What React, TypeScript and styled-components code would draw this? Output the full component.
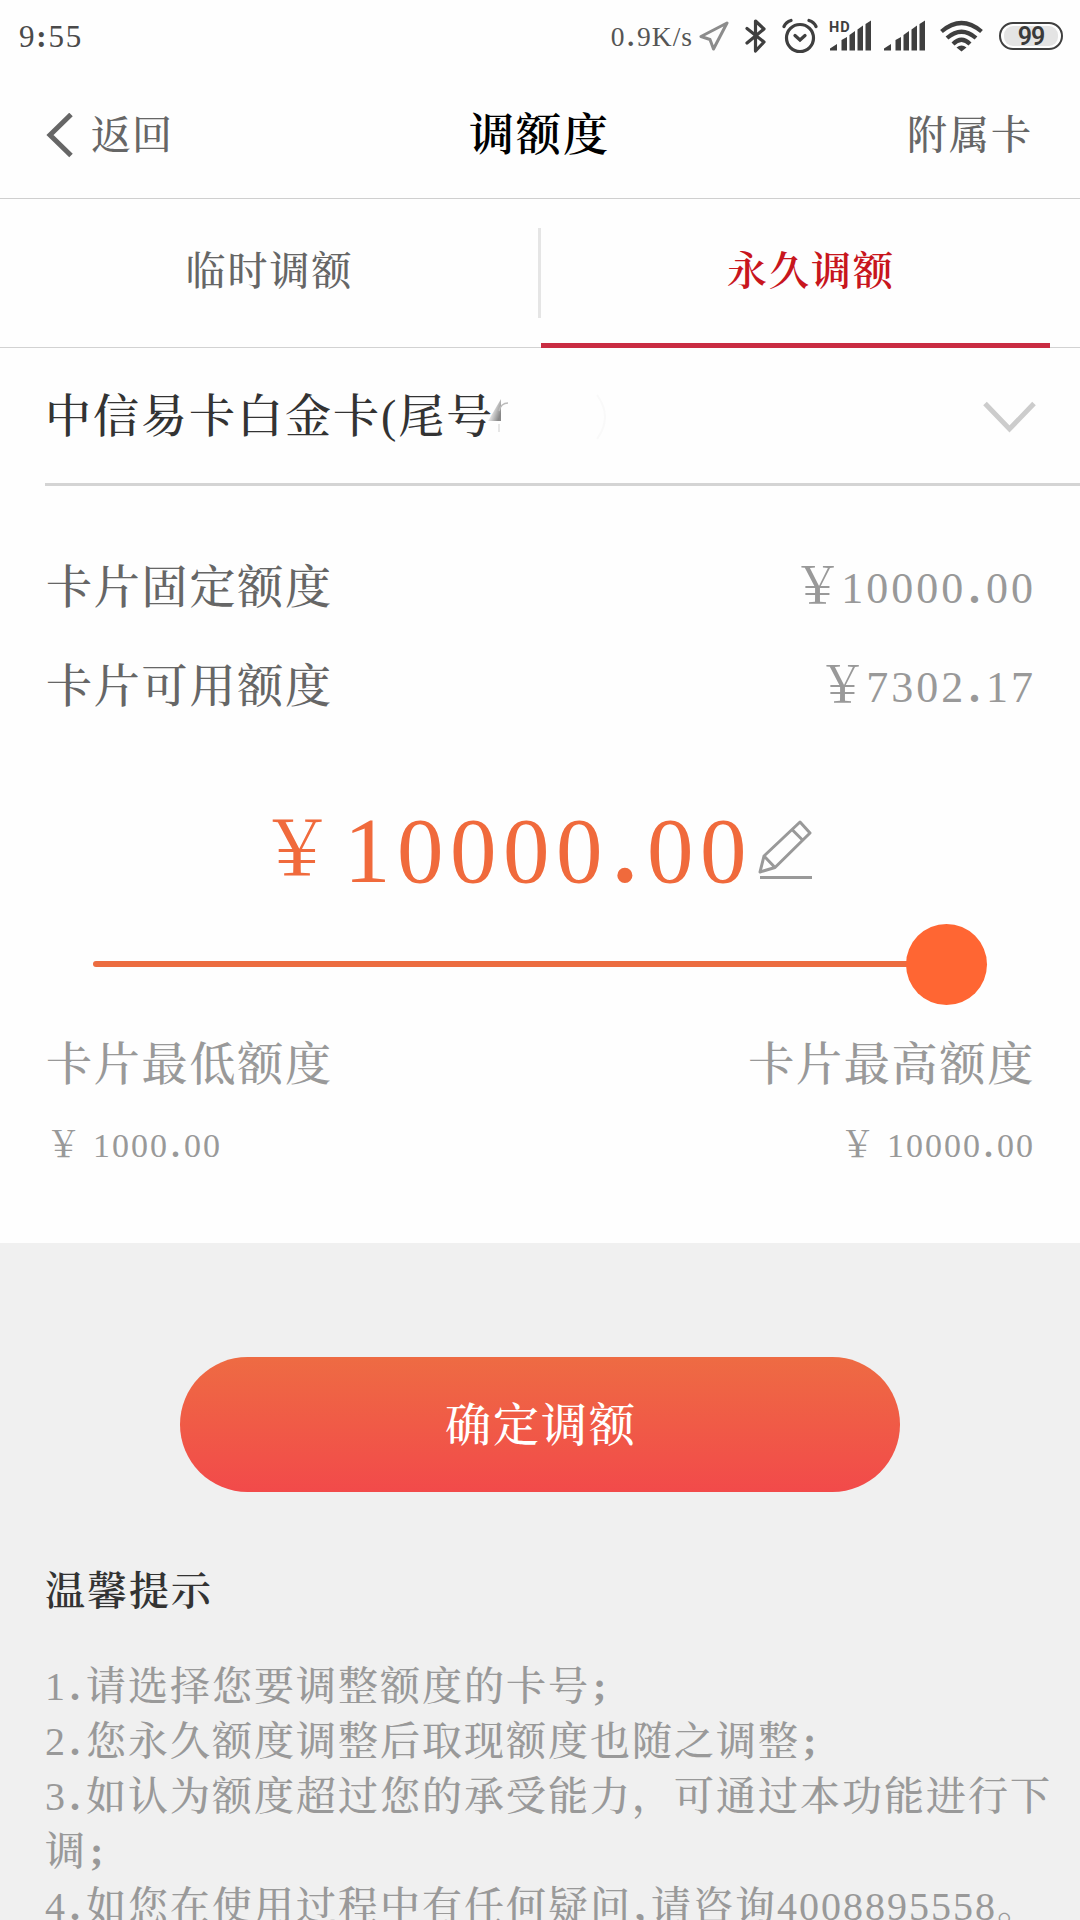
import React from 'react';
import styled, { createGlobalStyle } from 'styled-components';

const serif = `"Liberation Serif", "Noto Serif CJK SC", "Noto Sans CJK SC", serif`;

const Global = createGlobalStyle`
  * { box-sizing: border-box; }
  body { margin: 0; background: #fefefe; }
`;

const Screen = styled.div`
  width: 1080px;
  height: 1920px;
  overflow: hidden;
  display: flex;
  flex-direction: column;
  background: #fefefe;
  font-family: ${serif};
  white-space: nowrap;

  > * { flex-shrink: 0; }
`;

const Text = styled.span<{ $size: number; $color?: string; $track?: number; $weight?: number }>`
  display: block;
  font-size: ${(p) => p.$size}px;
  line-height: 60px;
  letter-spacing: ${(p) => p.$track ?? 0}px;
  color: ${(p) => p.$color ?? '#666'};
  font-weight: ${(p) => p.$weight ?? 500};
`;

const StatusBar = styled.div`
  height: 72px;
  padding: 0 17px 0 19px;
  display: flex;
  align-items: center;
  justify-content: space-between;
`;

const StatusText = styled(Text)`
  padding-top: 2px;
  font-weight: 400;
`;

const StatusIcons = styled.div`
  display: flex;
  align-items: center;
`;

const Glyph = styled.svg<{ $gap: number }>`
  display: block;
  flex: none;
  margin-left: ${(p) => p.$gap}px;
`;

const Battery = styled.div`
  width: 64px;
  height: 28px;
  margin: 0 0 1px 16px;
  padding: 2px 3px;
  border: 2.5px solid #3f3f3f;
  border-radius: 14px;
  display: flex;
`;

const Charge = styled.div`
  flex: 1;
  padding-top: 2px;
  border-radius: 9px;
  background: #e4e4e4;
  display: flex;
  align-items: center;
  justify-content: center;
  font: 600 25px/20px Roboto, sans-serif;
  letter-spacing: -1px;
  color: #3a3a3a;
`;

const Header = styled.header`
  height: 127px;
  padding: 1px 47px 0 46px;
  border-bottom: 1px solid #cfcfcf;
  display: grid;
  grid-template-columns: 1fr auto 1fr;
  align-items: center;
`;

const Back = styled.div`
  display: flex;
  align-items: center;
  gap: 18px;
`;

const HeaderAction = styled.div`
  justify-self: end;
`;

const Tabs = styled.nav`
  height: 149px;
  display: grid;
  grid-template-columns: 538px 3px 509px 30px;
  border-bottom: 1px solid #d2d2d2;
`;

const Tab = styled.div<{ $active?: boolean }>`
  height: 149px;
  padding-top: 43px;
  padding-left: ${(p) => (p.$active ? 31 : 1)}px;
  display: flex;
  justify-content: center;
  border-bottom: ${(p) => (p.$active ? '5px solid #c92c42' : '0')};
`;

const TabDivider = styled.div`
  height: 90px;
  margin-top: 29px;
  background: #e5e5e5;
`;

const CardPicker = styled.div`
  height: 138px;
  margin-left: 45px;
  padding: 2px 44px 0 0;
  border-bottom: 3px solid #d4d4d4;
  display: flex;
  align-items: center;
  justify-content: space-between;
`;

const CardName = styled.div`
  display: flex;
  align-items: center;
`;

const Erased = styled.svg`
  display: block;
  margin-left: -6px;
`;

const Limits = styled.section`
  padding: 52px 47px 0 46px;
`;

const Row = styled.div<{ $height: number }>`
  height: ${(p) => p.$height}px;
  display: flex;
  align-items: center;
  justify-content: space-between;
`;

const Digits = styled.span<{ $size: number; $track: number }>`
  font-size: ${(p) => p.$size}px;
  letter-spacing: ${(p) => p.$track}px;
  margin-right: ${(p) => -p.$track}px;
`;

const Dot = styled.span<{ $pad?: number }>`
  padding: 0 ${(p) => p.$pad ?? 0.067}em;
  font-weight: 700;
`;

const Yen = styled.span<{ $size: number; $gap: number }>`
  font-size: ${(p) => p.$size}px;
  font-weight: 500;
  margin-right: ${(p) => p.$gap}px;
`;

const Money = styled.div<{ $color?: string; $lift?: number }>`
  padding-bottom: ${(p) => p.$lift ?? 0}px;
  display: flex;
  align-items: baseline;
  color: ${(p) => p.$color ?? '#999'};
`;

const MaxLabel = styled.div`
  margin-right: -2px;
`;

const Chosen = styled.div`
  height: 134px;
  margin-top: 47px;
  padding-left: 214px;
  display: flex;
  align-items: center;
`;

const ChosenYen = styled.div`
  padding-bottom: 14px;
  color: #f06a3c;
`;

const Slider = styled.div`
  height: 82px;
  margin: 6px 46px 1px 47px;
  display: flex;
  align-items: center;
`;

const Track = styled.div`
  flex: 1;
  height: 6px;
  border-radius: 3px 0 0 3px;
  background: #ec6c40;
`;

const Thumb = styled.div`
  width: 81px;
  height: 81px;
  margin-left: -1px;
  border-radius: 50%;
  background: #ff6633;
`;

const Footer = styled.section`
  height: 677px;
  margin-top: 81px;
  padding: 114px 0 0 45px;
  background: #f0f0f0;
`;

const Confirm = styled.button`
  width: 720px;
  height: 135px;
  margin: 0 0 0 135px;
  padding: 2px 0 0 2px;
  border: 0;
  border-radius: 68px;
  background: linear-gradient(#ee6b43, #f24a4a);
  display: flex;
  align-items: center;
  justify-content: center;
  font-family: ${serif};
`;

const TipsTitle = styled.div`
  margin-top: 70px;
`;

const Tips = styled.div`
  margin-top: 37px;
`;

const Tip = styled.div`
  height: 55px;
  font-size: 40px;
  font-weight: 500;
  line-height: 55px;
  letter-spacing: 2px;
  color: #999;
`;

const Mark = styled.span`
  padding: 0 4px 0 3px;
  font-weight: 700;
`;

const Figure = ({ value, size, track, pad }: { value: string; size: number; track: number; pad?: number }) => {
  const [whole, cents] = value.split('.');
  return (
    <Digits $size={size} $track={track}>
      {whole}<Dot $pad={pad}>.</Dot>{cents}
    </Digits>
  );
};

const Signal = ({ hd, gap }: { hd?: boolean; gap: number }) => (
  <Glyph $gap={gap} width="45" height="34" viewBox="-4 0 45 34" fill="#3f3f3f">
    <path d="M0 31.500V29.500L7 25v6.500zM11.500 31.500V21l5.500-3v13.500zM19.500 31.500V16l5.500-4v19.500zM27.500 31.500V10.500l5.500-4v25zM35.500 31.500V5l5.500-3.500v30z" />
    {hd && (
      <text x="-1" y="12.500" fontFamily="Roboto, sans-serif" fontWeight="700" fontSize="14.500" letterSpacing="1">HD</text>
    )}
  </Glyph>
);

const tips = [
  '1.请选择您要调整额度的卡号;',
  '2.您永久额度调整后取现额度也随之调整;',
  '3.如认为额度超过您的承受能力，可通过本功能进行下',
  '调;',
  '4.如您在使用过程中有任何疑问,请咨询4008895558。',
];

const renderTip = (line: string) =>
  line.split(/([.,;])/).map((part, i) =>
    /^[.,;]$/.test(part) ? <Mark key={i}>{part}</Mark> : <React.Fragment key={i}>{part}</React.Fragment>
  );

export default function App() {
  return (
    <Screen>
      <Global />
      <StatusBar>
        <StatusText $size={31} $track={1.8} $color="#4a4a4a">9<b>:</b>55</StatusText>
        <StatusIcons>
          <StatusText $size={27.5} $track={1} $color="#555">0<Dot>.</Dot>9K/s</StatusText>
          <Glyph $gap={6} width="30" height="30" viewBox="0 0 30 30" fill="none" stroke="#8c8c8c" strokeWidth="3" strokeLinejoin="round">
            <path d="M28 2 2 15.500l9 3 3.500 9.500z" />
          </Glyph>
          <Glyph $gap={16} width="22" height="36" viewBox="0 0 22 36" fill="none" stroke="#3f3f3f" strokeWidth="3.200" strokeLinejoin="round" strokeLinecap="round">
            <path d="M2 10.500 19 24l-8.500 9V3L19 11 2 25" />
          </Glyph>
          <Glyph $gap={15} width="36" height="36" viewBox="0 0 36 36" fill="none" stroke="#3f3f3f" strokeWidth="3.200" strokeLinecap="round">
            <circle cx="18" cy="20" r="13.500" />
            <path d="m13 17.500 5 4.500 5-4.500M2 8.500Q4 4 9 2.500M34 8.500Q32 4 27 2.500" />
          </Glyph>
          <Signal hd gap={8} />
          <Signal gap={9} />
          <Glyph $gap={15} width="43" height="32" viewBox="0 0 43 32" fill="none" stroke="#3f3f3f" strokeWidth="4.200">
            <path d="M1.500 11.500Q21.500-5.500 41.500 11.500M7 18Q21.500 5.500 36 18M13 24Q21.500 15.500 30 24" />
            <path d="m16.500 27.500q5-4 10 0l-5 4z" fill="#3f3f3f" stroke="none" />
          </Glyph>
          <Battery><Charge>99</Charge></Battery>
        </StatusIcons>
      </StatusBar>

      <Header>
        <Back>
          <svg width="27" height="46" viewBox="0 0 27 46" fill="none" stroke="#666" strokeWidth="5">
            <path d="M25 1.500 4 22l21 20.500" />
          </svg>
          <Text $size={40} $track={1}>返回</Text>
        </Back>
        <Text $size={45} $track={2} $color="#000" $weight={600}>调额度</Text>
        <HeaderAction><Text $size={40} $track={2}>附属卡</Text></HeaderAction>
      </Header>

      <Tabs>
        <Tab><Text $size={40} $track={2}>临时调额</Text></Tab>
        <TabDivider />
        <Tab $active><Text $size={40} $track={2} $color="#c8161d" $weight={600}>永久调额</Text></Tab>
      </Tabs>

      <CardPicker>
        <CardName>
          <Text $size={46} $track={2} $color="#333">中信易卡白金卡(尾号</Text>
          <Erased width="124" height="60" viewBox="0 0 124 60" fill="none">
            <defs>
              <linearGradient id="fade" x1="0" y1="0" x2="1" y2="0.600">
                <stop offset="0.350" stopColor="#888" stopOpacity="0" />
                <stop offset="1" stopColor="#888" />
              </linearGradient>
            </defs>
            <path d="M0 34 13 12v22z" fill="url(#fade)" />
            <path d="M11 24q2-8 9-8" stroke="#bbb" strokeWidth="1.500" />
            <path d="M11 37v8" stroke="#e6e6e6" strokeWidth="2" />
            <path d="M109 8q16 22 0 44" stroke="#f9f9f9" strokeWidth="2" />
          </Erased>
        </CardName>
        <svg width="53" height="32" viewBox="0 0 53 32" fill="none" stroke="#ccc" strokeWidth="5">
          <path d="M2 2.500 26.500 28 51 2.500" />
        </svg>
      </CardPicker>

      <Limits>
        <Row $height={99}>
          <Text $size={46} $track={1.8}>卡片固定额度</Text>
          <Money $lift={12}><Yen $size={49} $gap={-1}>￥</Yen><Figure value="10000.00" size={44} track={3} /></Money>
        </Row>
        <Row $height={99}>
          <Text $size={46} $track={1.8}>卡片可用额度</Text>
          <Money $lift={12}><Yen $size={49} $gap={-1}>￥</Yen><Figure value="7302.17" size={44} track={3} /></Money>
        </Row>
        <Chosen>
          <ChosenYen><Yen $size={74} $gap={10}>￥</Yen></ChosenYen>
          <Money $color="#f06a3c"><Figure value="10000.00" size={93} track={6.5} pad={0.045} /></Money>
          <Glyph $gap={11} width="55" height="60" viewBox="0 0 55 60" fill="none" stroke="#999" strokeWidth="3" strokeLinejoin="round">
            <path d="M2 57.500h52M2 52 6 36 42 2l10 11-35 34.500zM6 36l11 11.500M34 9.500l11 11" />
          </Glyph>
        </Chosen>
        <Slider><Track /><Thumb /></Slider>
        <Row $height={118}>
          <Text $size={46} $track={1.8} $color="#999">卡片最低额度</Text>
          <MaxLabel><Text $size={46} $track={1.8} $color="#999">卡片最高额度</Text></MaxLabel>
        </Row>
        <Row $height={38}>
          <Money $lift={3}><Yen $size={35} $gap={12}>￥</Yen><Figure value="1000.00" size={34} track={2} /></Money>
          <Money $lift={3}><Yen $size={35} $gap={12}>￥</Yen><Figure value="10000.00" size={34} track={2} /></Money>
        </Row>
      </Limits>

      <Footer>
        <Confirm><Text $size={46} $track={2} $color="#fff">确定调额</Text></Confirm>
        <TipsTitle><Text $size={40} $track={2} $color="#333" $weight={600}>温馨提示</Text></TipsTitle>
        <Tips>{tips.map((t) => <Tip key={t}>{renderTip(t)}</Tip>)}</Tips>
      </Footer>
    </Screen>
  );
}
